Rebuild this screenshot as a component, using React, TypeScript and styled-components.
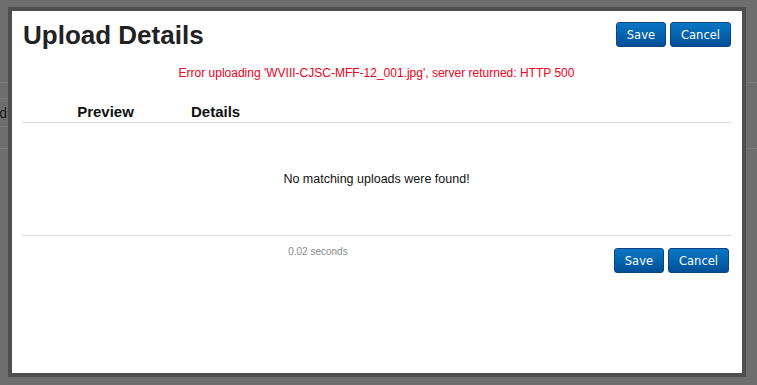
import styled, { createGlobalStyle } from 'styled-components';

const GlobalStyle = createGlobalStyle`
  html, body {
    margin: 0;
    padding: 0;
    background: #6e6e6e;
    font-family: "Liberation Sans", Arial, sans-serif;
  }
`;

const Backdrop = styled.div`
  position: relative;
  min-height: 385px;
  padding-top: 82px;
  box-sizing: border-box;
  overflow: hidden;
`;

const PageBand = styled.div`
  height: 65px;
  border-top: 1px solid #7c7c7c;
  border-bottom: 1px solid #7c7c7c;
  display: flex;
`;

const PageCell = styled.div`
  width: 7px;
  margin-top: 15px;
  height: 27px;
  border-top: 1px solid #7c7c7c;
  border-bottom: 1px solid #7c7c7c;
  display: flex;
  justify-content: flex-end;
  align-items: center;
  font-size: 14px;
  color: #1c1c1c;
`;

const Modal = styled.div`
  position: absolute;
  top: 7px;
  left: 8px;
  width: 738px;
  height: 370px;
  box-sizing: border-box;
  background: #fff;
  border: 4px solid #4f4f4f;
  padding: 0 11px 0 10px;
  display: flex;
  flex-direction: column;
`;

const Header = styled.div`
  display: flex;
  justify-content: space-between;
  align-items: flex-start;
  padding-top: 11px;
`;

const Title = styled.h1`
  margin: 1px 0 0 1px;
  font-size: 26px;
  line-height: 25px;
  font-weight: bold;
  color: #222;
`;

const ButtonGroup = styled.div<{ $offset?: number }>`
  display: flex;
  gap: 4px;
  margin-top: ${(p) => p.$offset ?? 0}px;
  margin-right: ${(p) => (p.$offset ? 2 : 0)}px;
`;

const Button = styled.button`
  height: 25px;
  padding: 0 10px;
  border: 1px solid #0d4380;
  border-radius: 3px;
  background: linear-gradient(to bottom, #0b76c4 0%, #0464ae 50%, #004f98 100%);
  color: #fff;
  font-family: "DejaVu Sans", Verdana, sans-serif;
  font-size: 11.5px;
  line-height: 24px;
  cursor: pointer;
`;

const ErrorMessage = styled.div`
  margin-top: 17px;
  text-align: center;
  color: #f0001a;
  font-size: 12px;
  line-height: 16px;
`;

const Table = styled.div`
  margin-top: 22px;
  display: grid;
  grid-template-columns: 167px 1fr;
`;

const HeadCell = styled.div<{ $center?: boolean }>`
  font-size: 15px;
  font-weight: bold;
  line-height: 18px;
  color: #111;
  padding: 0 0 1px ${(p) => (p.$center ? 0 : 2)}px;
  text-align: ${(p) => (p.$center ? 'center' : 'left')};
  border-bottom: 1px solid #dcdcdc;
`;

const EmptyRow = styled.div`
  grid-column: 1 / -1;
  height: 112px;
  display: flex;
  align-items: center;
  justify-content: center;
  font-size: 12.5px;
  color: #111;
  border-bottom: 1px solid #dcdcdc;
`;

const Footer = styled.div`
  display: flex;
  align-items: flex-start;
  padding-top: 10px;
`;

const Stats = styled.div`
  flex: 1;
  text-align: center;
  font-size: 10px;
  line-height: 12px;
  color: #8a8a8a;
`;

function Actions({ offset }: { offset?: number }) {
  return (
    <ButtonGroup $offset={offset}>
      <Button>Save</Button>
      <Button>Cancel</Button>
    </ButtonGroup>
  );
}

export default function App() {
  return (
    <>
      <GlobalStyle />
      <Backdrop>
        <PageBand>
          <PageCell>d</PageCell>
        </PageBand>
        <Modal>
          <Header>
            <Title>Upload Details</Title>
            <Actions />
          </Header>
          <ErrorMessage>
            Error uploading 'WVIII-CJSC-MFF-12_001.jpg', server returned: HTTP 500
          </ErrorMessage>
          <Table>
            <HeadCell $center>Preview</HeadCell>
            <HeadCell>Details</HeadCell>
            <EmptyRow>No matching uploads were found!</EmptyRow>
          </Table>
          <Footer>
            <Stats>0.02 seconds</Stats>
            <Actions offset={2} />
          </Footer>
        </Modal>
      </Backdrop>
    </>
  );
}
